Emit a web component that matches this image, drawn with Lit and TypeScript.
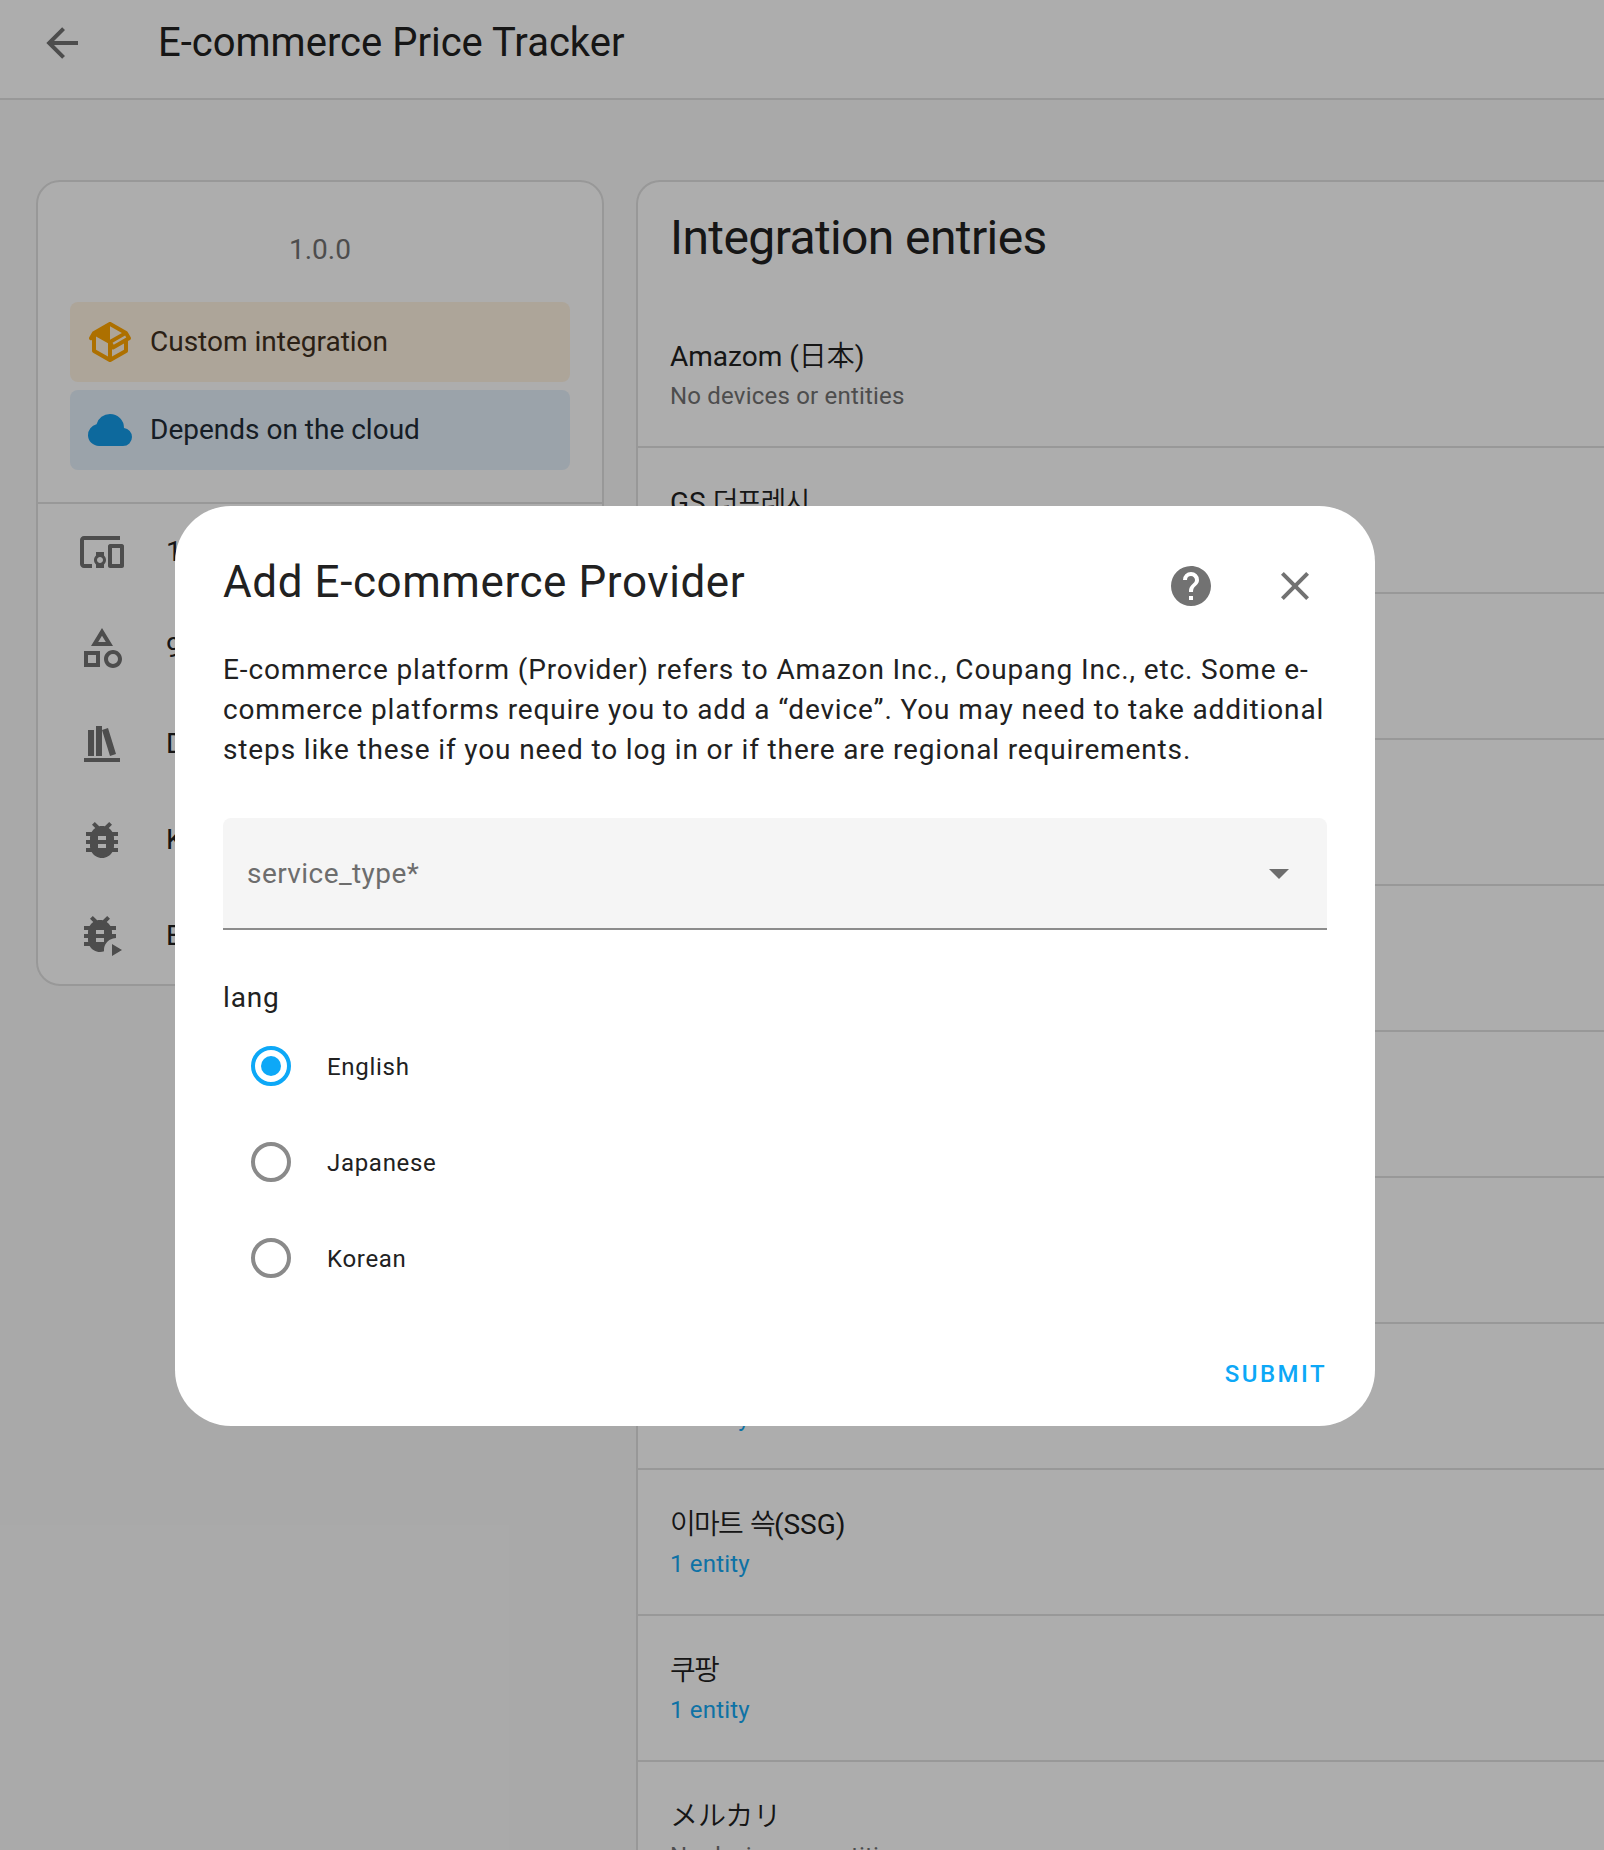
import { LitElement, html, css, nothing } from "lit";
import { customElement, property, state } from "lit/decorators.js";

const ICONS = {
  back: "M20,11V13H8L13.5,18.5L12.08,19.92L4.16,12L12.08,4.08L13.5,5.5L8,11H20Z",
  package:
    "M2,10.96C1.5,10.68 1.35,10.07 1.63,9.59L3.13,7C3.24,6.8 3.41,6.66 3.6,6.58L11.43,2.18C11.59,2.06 11.79,2 12,2C12.21,2 12.41,2.06 12.57,2.18L20.47,6.62C20.66,6.72 20.82,6.88 20.91,7.08L22.36,9.6C22.64,10.08 22.47,10.69 22,10.96L21,11.54V16.5C21,16.88 20.79,17.21 20.47,17.38L12.57,21.82C12.41,21.94 12.21,22 12,22C11.79,22 11.59,21.94 11.43,21.82L3.53,17.38C3.21,17.21 3,16.88 3,16.5V10.96C2.7,11.13 2.32,11.14 2,10.96M12,4.15V4.15L12,10.85V10.85L17.96,7.5L12,4.15M5,15.91L11,19.29V12.58L5,9.21V15.91M19,15.91V12.69L14,15.59C13.67,15.77 13.3,15.76 13,15.6V19.29L19,15.91M13.85,13.36L20.13,9.73L19.55,8.72L13.27,12.35L13.85,13.36Z",
  cloud:
    "M6.5 20Q4.22 20 2.61 18.43 1 16.85 1 14.58 1 12.63 2.17 11.1 3.35 9.57 5.25 9.15 5.88 6.85 7.75 5.43 9.63 4 12 4 14.93 4 16.96 6.04 19 8.07 19 11 20.73 11.2 21.86 12.5 23 13.78 23 15.5 23 17.38 21.69 18.69 20.38 20 18.5 20Z",
  devices:
    "M3 6H21V4H3C1.9 4 1 4.9 1 6V18C1 19.1 1.9 20 3 20H7V18H3V6M13 12H9V13.78C8.39 14.33 8 15.11 8 16C8 16.89 8.39 17.67 9 18.22V20H13V18.22C13.61 17.67 14 16.88 14 16S13.61 14.33 13 13.78V12M11 17.5C10.17 17.5 9.5 16.83 9.5 16S10.17 14.5 11 14.5 12.5 15.17 12.5 16 11.83 17.5 11 17.5M22 8H16C15.5 8 15 8.5 15 9V19C15 19.5 15.5 20 16 20H22C22.5 20 23 19.5 23 19V9C23 8.5 22.5 8 22 8M21 18H17V10H21V18Z",
  shape:
    "M11,13.5V21.5H3V13.5H11M9,15.5H5V19.5H9V15.5M12,2L17.5,11H6.5L12,2M12,5.86L10.08,9H13.92L12,5.86M17.5,13C20,13 22,15 22,17.5C22,20 20,22 17.5,22C15,22 13,20 13,17.5C13,15 15,13 17.5,13M17.5,15A2.5,2.5 0 0,0 15,17.5A2.5,2.5 0 0,0 17.5,20A2.5,2.5 0 0,0 20,17.5A2.5,2.5 0 0,0 17.5,15Z",
  bookshelf:
    "M9 3V18H12V3H9M12 5L16 18L19 17L15 4L12 5M5 5V18H8V5H5M3 19V21H21V19H3Z",
  bug: "M14,12H10V10H14M14,16H10V14H14M20,8H17.19C16.74,7.22 16.12,6.55 15.37,6.04L17,4.41L15.59,3L13.42,5.17C12.96,5.06 12.5,5 12,5C11.5,5 11.04,5.06 10.59,5.17L8.41,3L7,4.41L8.62,6.04C7.88,6.55 7.26,7.22 6.81,8H4V10H6.09C6.04,10.33 6,10.66 6,11V12H4V14H6V15C6,15.34 6.04,15.67 6.09,16H4V18H6.81C7.85,19.79 9.78,21 12,21C14.22,21 16.15,19.79 17.19,18H20V16H17.91C17.96,15.67 18,15.34 18,15V14H20V12H18V11C18,10.66 17.96,10.33 17.91,10H20V8Z",
  bugPlay:
    "M13,11H9V9H13M13,15H9V13H13M19,7H16.19C15.74,6.22 15.12,5.55 14.37,5.04L16,3.41L14.59,2L12.42,4.17C11.96,4.06 11.5,4 11,4C10.5,4 10.04,4.06 9.59,4.17L7.41,2L6,3.41L7.62,5.04C6.88,5.55 6.26,6.22 5.81,7H3V9H5.09C5.04,9.33 5,9.66 5,10V11H3V13H5V14C5,14.34 5.04,14.67 5.09,15H3V17H5.81C6.85,18.79 8.78,20 11,20C11.7,20 12.4,19.87 13.05,19.65C13,19.44 13,19.22 13,19C13,16.2 14.9,13.85 17.5,13.2L19,13V11H17V10C17,9.66 16.96,9.33 16.91,9H19V7M17,16V22L22,19Z",
  help: "M15.07,11.25L14.17,12.17C13.45,12.89 13,13.5 13,15H11V14.5C11,13.39 11.45,12.39 12.17,11.67L13.41,10.41C13.78,10.05 14,9.55 14,9C14,7.89 13.1,7 12,7A2,2 0 0,0 10,9H8A4,4 0 0,1 12,5A4,4 0 0,1 16,9C16,9.88 15.64,10.67 15.07,11.25M13,19H11V17H13M12,2A10,10 0 0,0 2,12A10,10 0 0,0 12,22A10,10 0 0,0 22,12C22,6.47 17.5,2 12,2Z",
  close:
    "M19,6.41L17.59,5L12,10.59L6.41,5L5,6.41L10.59,12L5,17.59L6.41,19L12,13.41L17.59,19L19,17.59L13.41,12L19,6.41Z",
  menuDown: "M7,10L12,15L17,10H7Z",
};

type IconName = keyof typeof ICONS;

@customElement("app-icon")
class AppIcon extends LitElement {
  @property() name: IconName = "back";

  static styles = css`
    :host {
      display: block;
      flex: none;
      width: 48px;
      height: 48px;
    }
    .glyph {
      display: block;
      width: 100%;
      height: 100%;
      fill: currentColor;
    }
  `;

  render() {
    return html`<svg class="glyph" viewBox="0 0 24 24"><path d=${ICONS[this.name]}></path></svg>`;
  }
}

const FONT = css`
  :host {
    font-family: Roboto, "Noto Sans CJK KR", sans-serif;
  }
`;

const LINKS: { icon: IconName; label: string }[] = [
  { icon: "devices", label: "1 device" },
  { icon: "shape", label: "9 entities" },
  { icon: "bookshelf", label: "Documentation" },
  { icon: "bug", label: "Known issues" },
  { icon: "bugPlay", label: "Enable debug logging" },
];

@customElement("integration-card")
class IntegrationCard extends LitElement {
  static styles = [
    FONT,
    css`
      :host {
        display: block;
        box-sizing: border-box;
        width: 568px;
        border: 2px solid #e0e0e0;
        border-radius: 24px;
        background: #fff;
        color: #212121;
        font-size: 28px;
      }
      .summary {
        display: flex;
        flex-direction: column;
        gap: 8px;
        padding: 48px 32px 32px;
        border-bottom: 2px solid #e0e0e0;
      }
      .version {
        height: 40px;
        margin-bottom: 24px;
        line-height: 40px;
        text-align: center;
        color: #727272;
      }
      .notice {
        display: flex;
        align-items: center;
        gap: 16px;
        height: 80px;
        padding: 0 16px;
        border-radius: 8px;
      }
      .label {
        padding-bottom: 2px;
      }
      .custom {
        background: #fff3e2;
        color: #3f3021;
      }
      .custom app-icon {
        color: #ffa600;
      }
      .cloud {
        background: #e5f0fb;
        color: #212b35;
      }
      .cloud app-icon {
        color: #149be8;
      }
      .link {
        display: flex;
        align-items: center;
        gap: 40px;
        height: 96px;
        padding-left: 40px;
      }
      .link app-icon {
        color: #727272;
      }
    `,
  ];

  render() {
    return html`
      <div class="summary">
        <div class="version">1.0.0</div>
        <div class="notice custom">
          <app-icon name="package"></app-icon><span class="label">Custom integration</span>
        </div>
        <div class="notice cloud">
          <app-icon name="cloud"></app-icon><span class="label">Depends on the cloud</span>
        </div>
      </div>
      ${LINKS.map(
        (l) => html`<div class="link"><app-icon name=${l.icon}></app-icon><span class="label">${l.label}</span></div>`
      )}
    `;
  }
}

interface Entry {
  name?: unknown;
  note?: string;
  linked?: boolean;
}

const ENTRIES: Entry[] = [
  { name: html`Amazom (<span class="ja" lang="ja">日本</span>)`, note: "No devices or entities" },
  { name: html`GS <span class="ko" lang="ko">더프레시</span>` },
  {},
  {},
  {},
  {},
  {},
  { note: "1 entity", linked: true },
  { name: html`<span class="ko" lang="ko">이마트 쓱</span>(SSG)`, note: "1 entity", linked: true },
  { name: html`<span class="ko" lang="ko">쿠팡</span>`, note: "1 entity", linked: true },
  { name: html`<span class="ja" lang="ja">メルカリ</span>`, note: "No devices or entities" },
];

@customElement("entries-card")
class EntriesCard extends LitElement {
  static styles = [
    FONT,
    css`
      :host {
        display: block;
        box-sizing: border-box;
        border: 2px solid #e0e0e0;
        border-right: none;
        border-radius: 24px 0 0 0;
        background: #fff;
        color: #212121;
      }
      .heading {
        height: 120px;
        padding-left: 32px;
        box-sizing: border-box;
        padding-top: 24px;
        margin: 0;
        font-size: 48px;
        line-height: 64px;
        font-weight: 400;
        letter-spacing: -0.6px;
      }
      .entry {
        box-sizing: border-box;
        height: 146px;
        padding: 35px 32px 0;
        border-bottom: 2px solid #e0e0e0;
      }
      .name {
        height: 41px;
        font-size: 28px;
        line-height: 40px;
        white-space: nowrap;
      }
      .note {
        height: 36px;
        font-size: 24px;
        line-height: 36px;
        letter-spacing: 0.2px;
        color: #727272;
      }
      .linked {
        color: #14a8f4;
      }
      .ja {
        font-family: "Noto Sans CJK JP", sans-serif;
        font-weight: 350;
        line-height: 0;
      }
      .ko {
        font-family: "Noto Sans CJK KR", sans-serif;
        font-weight: 350;
        line-height: 0;
        letter-spacing: -1.8px;
        word-spacing: 2px;
      }
    `,
  ];

  render() {
    return html`
      <h1 class="heading">Integration entries</h1>
      ${ENTRIES.map(
        (e) => html`
          <div class="entry">
            <div class="name">${e.name ?? nothing}</div>
            <div class="note ${e.linked ? "linked" : ""}">${e.note ?? nothing}</div>
          </div>
        `
      )}
    `;
  }
}

@customElement("provider-dialog")
class ProviderDialog extends LitElement {
  @state() private lang = "English";

  static styles = [
    FONT,
    css`
      :host {
        display: block;
        box-sizing: border-box;
        width: 1200px;
        height: 920px;
        padding: 48px 48px 0;
        border-radius: 56px;
        background: #fff;
        color: #212121;
      }
      .top {
        display: flex;
        align-items: center;
        height: 64px;
        padding-right: 8px;
        gap: 56px;
        color: #727272;
      }
      .title {
        flex: 1;
        margin: -8px 0 0;
        font-size: 44px;
        font-weight: 400;
        letter-spacing: 0.58px;
        color: #212121;
      }
      .text {
        margin: 32px 0 0;
        font-size: 28px;
        line-height: 40px;
        letter-spacing: 0.864px;
        white-space: nowrap;
      }
      .select {
        display: flex;
        align-items: center;
        justify-content: space-between;
        box-sizing: border-box;
        height: 112px;
        margin-top: 48px;
        padding: 0 24px;
        border-bottom: 2px solid #8c8c8c;
        border-radius: 8px 8px 0 0;
        background: #f5f5f5;
        color: #6d6d6d;
        font-size: 28px;
        letter-spacing: 0.43px;
      }
      .legend {
        margin-top: 48px;
        height: 40px;
        line-height: 40px;
        font-size: 28px;
        letter-spacing: 0.864px;
      }
      .option {
        display: flex;
        align-items: center;
        gap: 36px;
        height: 96px;
        padding-left: 28px;
        font-size: 24px;
        letter-spacing: 0.7px;
      }
      .option-label {
        padding-top: 2px;
      }
      .radio {
        display: grid;
        place-items: center;
        box-sizing: border-box;
        width: 40px;
        height: 40px;
        border: 4px solid #8a8a8a;
        border-radius: 50%;
      }
      .checked {
        border-color: #0da8f7;
      }
      .dot {
        width: 20px;
        height: 20px;
        border-radius: 50%;
        background: #0da8f7;
      }
      .actions {
        display: flex;
        justify-content: flex-end;
        padding-top: 54px;
      }
      .submit {
        padding: 0;
        border: none;
        background: none;
        font: 500 24px/28px Roboto, sans-serif;
        letter-spacing: 2.45px;
        color: #0da8f7;
      }
    `,
  ];

  render() {
    return html`
      <div class="top">
        <h2 class="title">Add E-commerce Provider</h2>
        <app-icon name="help"></app-icon>
        <app-icon name="close"></app-icon>
      </div>
      <p class="text">
        E-commerce platform (Provider) refers to Amazon Inc., Coupang Inc., etc. Some e-<br />commerce platforms
        require you to add a “device”. You may need to take additional<br />steps like these if you need to log in or
        if there are regional requirements.
      </p>
      <div class="select"><span>service_type*</span><app-icon name="menuDown"></app-icon></div>
      <div class="legend">lang</div>
      ${["English", "Japanese", "Korean"].map(
        (l) => html`
          <div class="option" @click=${() => (this.lang = l)}>
            <span class="radio ${l === this.lang ? "checked" : ""}"
              >${l === this.lang ? html`<span class="dot"></span>` : nothing}</span
            >
            <span class="option-label">${l}</span>
          </div>
        `
      )}
      <div class="actions"><button class="submit">SUBMIT</button></div>
    `;
  }
}

@customElement("app-root")
class AppRoot extends LitElement {
  static styles = [
    FONT,
    css`
      :host {
        display: block;
        position: relative;
        width: 1604px;
        height: 1850px;
        overflow: hidden;
        background: #fafafa;
        color: #212121;
      }
      .toolbar {
        display: flex;
        align-items: center;
        gap: 72px;
        box-sizing: border-box;
        height: 100px;
        padding: 0 38px 12px;
        border-bottom: 2px solid #e0e0e0;
        background: #fff;
        font-size: 40px;
      }
      .toolbar app-icon {
        color: #727272;
      }
      .title {
        padding-bottom: 1px;
      }
      .content {
        display: grid;
        grid-template-columns: 568px 1fr;
        align-items: start;
        gap: 32px;
        padding: 80px 0 0 36px;
      }
      .scrim {
        position: absolute;
        inset: 0;
        display: flex;
        align-items: flex-start;
        padding: 506px 0 0 175px;
        background: rgba(0, 0, 0, 0.32);
      }
    `,
  ];

  render() {
    return html`
      <header class="toolbar">
        <app-icon name="back"></app-icon><span class="title">E-commerce Price Tracker</span>
      </header>
      <main class="content">
        <integration-card></integration-card>
        <entries-card></entries-card>
      </main>
      <div class="scrim"><provider-dialog></provider-dialog></div>
    `;
  }
}
